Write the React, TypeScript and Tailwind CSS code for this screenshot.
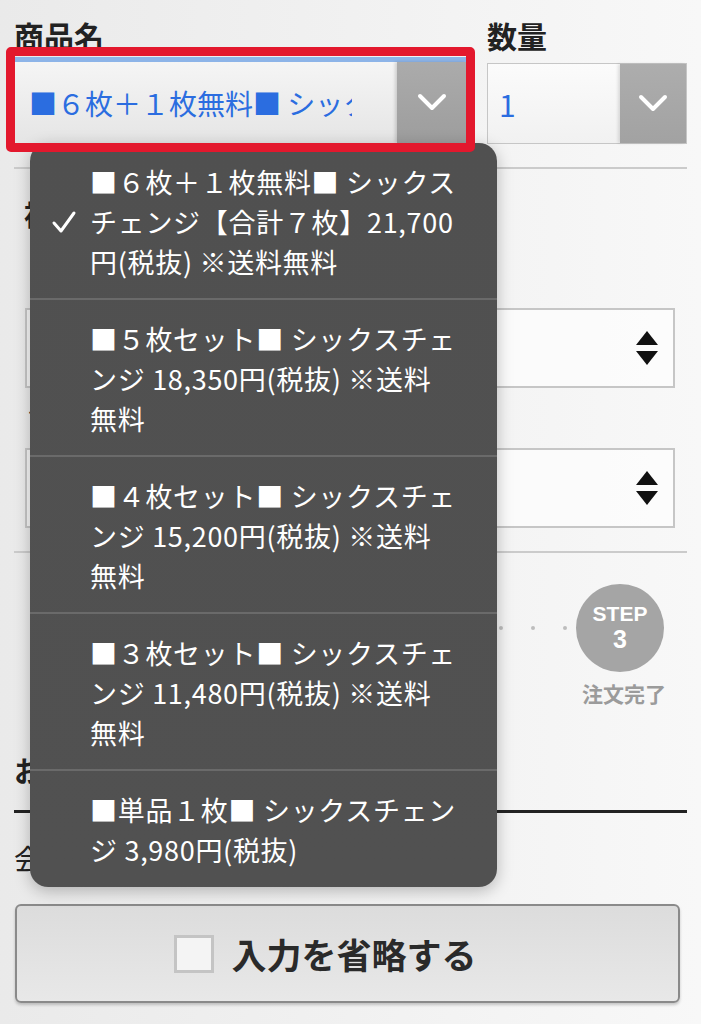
import React from 'react';

const options = [
  {
    checked: true,
    lines: ['■６枚＋１枚無料■ シックス', 'チェンジ【合計７枚】21,700', '円(税抜) ※送料無料'],
  },
  {
    checked: false,
    lines: ['■５枚セット■ シックスチェ', 'ンジ 18,350円(税抜) ※送料', '無料'],
  },
  {
    checked: false,
    lines: ['■４枚セット■ シックスチェ', 'ンジ 15,200円(税抜) ※送料', '無料'],
  },
  {
    checked: false,
    lines: ['■３枚セット■ シックスチェ', 'ンジ 11,480円(税抜) ※送料', '無料'],
  },
  {
    checked: false,
    lines: ['■単品１枚■ シックスチェン', 'ジ 3,980円(税抜)'],
  },
];

function Chevron() {
  return (
    <svg width="30" height="20" viewBox="0 0 30 20" fill="none">
      <path d="M3 3 L15 15 L27 3" stroke="#ffffff" strokeWidth="4" strokeLinecap="round" strokeLinejoin="round" />
    </svg>
  );
}

function UpDown() {
  return (
    <svg width="24" height="38" viewBox="0 0 24 38">
      <path d="M12 2 L23 16 L1 16 Z" fill="#111" />
      <path d="M1 22 L23 22 L12 36 Z" fill="#111" />
    </svg>
  );
}

function Check() {
  return (
    <svg width="26" height="24" viewBox="0 0 26 24" fill="none">
      <path d="M3 13 L10 21 L23 3" stroke="#ffffff" strokeWidth="3" strokeLinecap="round" strokeLinejoin="round" />
    </svg>
  );
}

function Step({ n, label }: { n: number; label: string }) {
  return (
    <div className="flex w-[88px] flex-col items-center">
      <div className="flex h-[88px] w-[88px] flex-col items-center justify-center rounded-full bg-[#a5a5a5] text-white font-['Liberation_Sans',sans-serif] font-bold">
        <span className="text-[21px] leading-[22px]">STEP</span>
        <span className="text-[25px] leading-[28px]">{n}</span>
      </div>
      <div className="mt-[9px] whitespace-nowrap pl-[8px] text-[21px] font-bold leading-[24px] text-[#9b9b9b]">{label}</div>
    </div>
  );
}

function Dots() {
  return (
    <div className="flex h-[88px] w-[182px] items-center justify-center gap-[28px]">
      {[0, 1, 2, 3, 4, 5].map((i) => (
        <span key={i} className="h-[4px] w-[4px] rounded-full bg-[#bdbdbd]" />
      ))}
    </div>
  );
}

export default function App() {
  return (
    <div className="relative h-[1024px] w-[701px] overflow-hidden bg-gradient-to-r from-[#eaeaea] to-[#f8f8f8] font-['Noto_Sans_CJK_JP',sans-serif] text-[#222]">
      <div className="px-[14px] pt-[17px]">
        {/* product + quantity */}
        <div className="flex gap-[21px]">
          <div className="w-[452px]">
            <div className="text-[30px] font-bold leading-[36px]">商品名</div>
            <div className="mt-[4px] flex h-[86px] border-t-[5px] border-[#8db4e8] bg-gradient-to-b from-[#f5f5f5] to-[#e5e5e5]">
              <div className="flex flex-1 items-center pl-[15px]">
                <div className="w-[323px] overflow-hidden whitespace-nowrap text-[28px] leading-[36px] text-[#2b6de0]">
                  ■６枚＋１枚無料■ シックスチェンジ
                </div>
              </div>
              <div className="flex w-[69px] items-center justify-center bg-gradient-to-b from-[#ababab] to-[#9d9d9d] shadow-[-2px_0_3px_rgba(0,0,0,0.15)]">
                <Chevron />
              </div>
            </div>
          </div>
          <div className="w-[200px]">
            <div className="text-[30px] font-bold leading-[36px]">数量</div>
            <div className="mt-[10px] flex h-[81px] border-[1.5px] border-[#c6c6c6] bg-gradient-to-b from-[#fbfbfb] to-[#f1f1f1]">
              <div className="flex flex-1 items-center pl-[11px] text-[30px] leading-[36px] text-[#2b6de0]">1</div>
              <div className="flex w-[66px] items-center justify-center bg-gradient-to-b from-[#adadad] to-[#a2a2a2] shadow-[-2px_0_3px_rgba(0,0,0,0.12)]">
                <Chevron />
              </div>
            </div>
          </div>
        </div>

        <div className="mt-[23px] h-[2px] bg-[#cbcbcb]" />

        {/* options */}
        <div className="mt-[27px] pl-[10px] text-[28px] font-bold leading-[36px]">補足オプション</div>
        <div className="mt-[37px] pl-[14px] text-[20px] leading-[30px]">カラー</div>
        <div className="ml-[11px] mt-[9px] flex h-[80px] w-[650px] items-center justify-end border-2 border-[#c6c6c6] bg-white/60 pr-[14px]">
          <UpDown />
        </div>
        <div className="mt-[13px] pl-[14px] text-[20px] leading-[30px]">サイズ</div>
        <div className="ml-[11px] mt-[17px] flex h-[80px] w-[650px] items-center justify-end border-2 border-[#c6c6c6] bg-white/60 pr-[14px]">
          <UpDown />
        </div>

        <div className="mt-[23px] h-[2px] bg-[#cbcbcb]" />

        {/* steps */}
        <div className="mt-[31px] flex items-start pl-[22px]">
          <Step n={1} label="情報入力" />
          <Dots />
          <Step n={2} label="内容確認" />
          <Dots />
          <Step n={3} label="注文完了" />
        </div>

        <div className="mt-[47px] text-[28px] font-bold leading-[36px]">お客様情報</div>
        <div className="mt-[22px] h-[3px] bg-[#222]" />
        <div className="mt-[27px] text-[28px] leading-[36px]">会員の方はログインしてください</div>

        <button className="ml-[1px] mt-[28px] flex h-[99px] w-[665px] items-center justify-center gap-[17px] rounded-[6px] border-2 border-[#8a8a8a] bg-gradient-to-b from-[#dcdcdc] to-[#e8e8e8] pr-[44px] shadow-[0_2px_3px_rgba(0,0,0,0.2)]">
          <span className="h-[38px] w-[40px] border-[3px] border-[#c4c4c4] bg-[#f4f4f4]" />
          <span className="text-[35px] font-bold leading-[40px] text-[#2a2a2a]">入力を省略する</span>
        </button>
      </div>

      {/* open picker */}
      <div className="absolute left-[30px] top-[143px] w-[467px] overflow-hidden rounded-[18px] bg-gradient-to-b from-[#505050] to-[#515151] text-white shadow-[0_4px_16px_rgba(0,0,0,0.25)]">
        {options.map((o, i) => (
          <div
            key={i}
            className={`flex pt-[19px] ${i < options.length - 1 ? 'border-b-2 border-[#6a6a6a] pb-[16px]' : 'pb-[17px]'}`}
          >
            <div className="w-[60px] shrink-0">
              {o.checked && (
                <div className="mt-[40px] flex h-[40px] items-center pl-[21px]">
                  <Check />
                </div>
              )}
            </div>
            <div className="text-[27px] leading-[40px] tracking-[0.7px]">
              {o.lines.map((l, j) => (
                <div key={j} className="whitespace-nowrap">{l}</div>
              ))}
            </div>
          </div>
        ))}
      </div>

      {/* annotation frame */}
      <div className="absolute left-[6px] top-[47px] h-[105px] w-[469px] rounded-[5px] border-[9px] border-[#e3182d]" />
    </div>
  );
}
